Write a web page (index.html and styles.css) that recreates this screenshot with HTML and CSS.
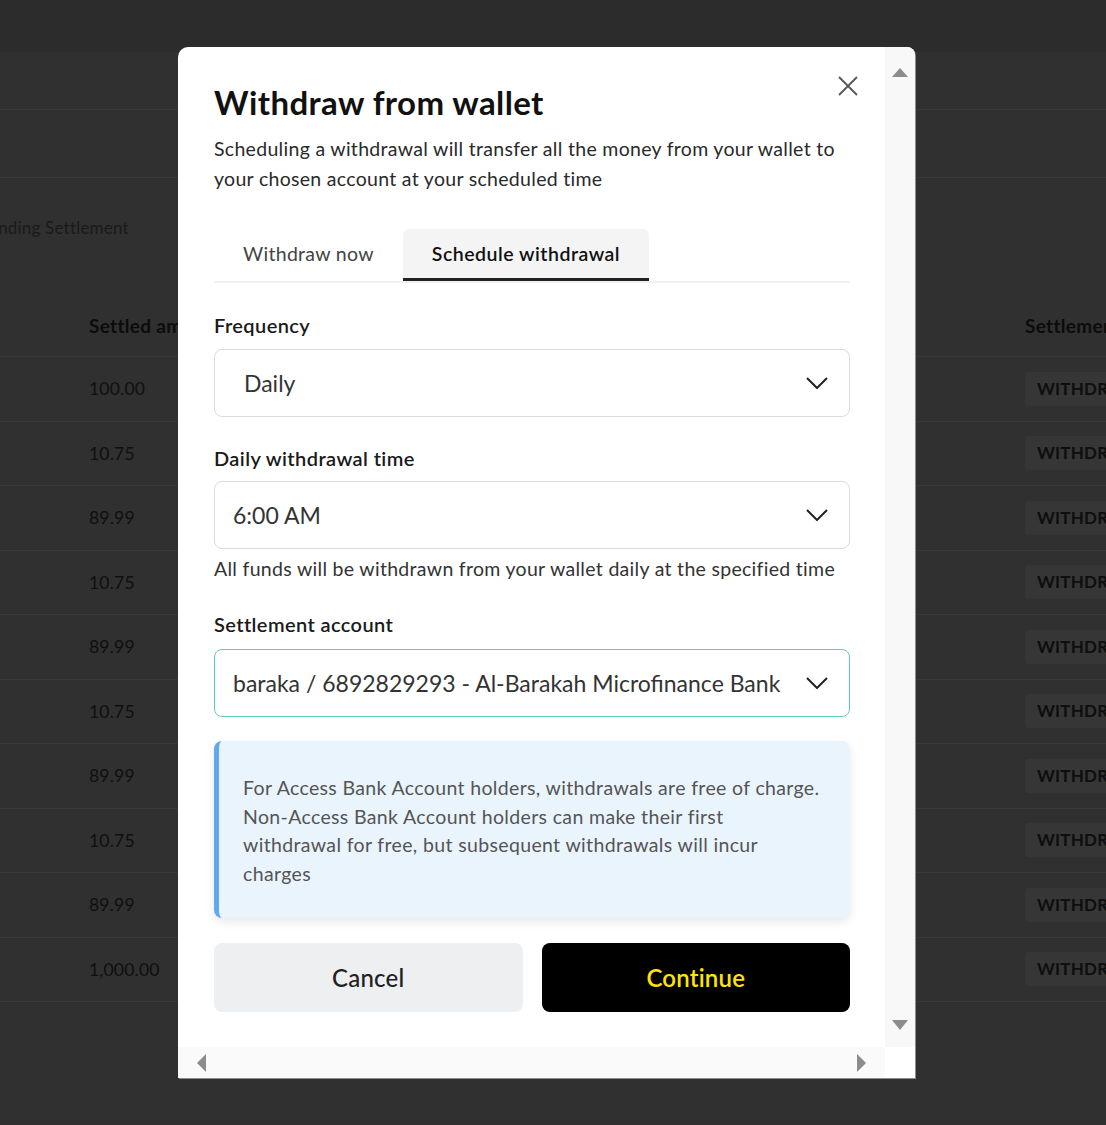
FILE: index.html
```html
<!DOCTYPE html>
<html lang="en">
<head>
<meta charset="utf-8">
<title>Withdraw from wallet</title>
<link rel="stylesheet" href="styles.css">
</head>
<body>
<div class="page">
  <div class="bg-top"></div>
  <div class="bg-band"></div>
  <div class="bg-band bg-band-tall"></div>
  <div class="bg-tabs"><span class="bg-tab">Pending Settlement</span></div>
  <div class="bg-table">
    <div class="bg-row bg-head"><span class="bg-amount">Settled amount</span><span class="bg-status">Settlement status</span></div>
    <div class="bg-row"><span class="bg-amount">100.00</span><span class="bg-status"><span class="badge">WITHDRAWAL</span></span></div>
    <div class="bg-row"><span class="bg-amount">10.75</span><span class="bg-status"><span class="badge">WITHDRAWAL</span></span></div>
    <div class="bg-row"><span class="bg-amount">89.99</span><span class="bg-status"><span class="badge">WITHDRAWAL</span></span></div>
    <div class="bg-row"><span class="bg-amount">10.75</span><span class="bg-status"><span class="badge">WITHDRAWAL</span></span></div>
    <div class="bg-row"><span class="bg-amount">89.99</span><span class="bg-status"><span class="badge">WITHDRAWAL</span></span></div>
    <div class="bg-row"><span class="bg-amount">10.75</span><span class="bg-status"><span class="badge">WITHDRAWAL</span></span></div>
    <div class="bg-row"><span class="bg-amount">89.99</span><span class="bg-status"><span class="badge">WITHDRAWAL</span></span></div>
    <div class="bg-row"><span class="bg-amount">10.75</span><span class="bg-status"><span class="badge">WITHDRAWAL</span></span></div>
    <div class="bg-row"><span class="bg-amount">89.99</span><span class="bg-status"><span class="badge">WITHDRAWAL</span></span></div>
    <div class="bg-row"><span class="bg-amount">1,000.00</span><span class="bg-status"><span class="badge">WITHDRAWAL</span></span></div>
  </div>
</div>

<div class="modal">
  <div class="modal-body">
    <div class="modal-head">
      <h1 class="title">Withdraw from wallet</h1>
      <button class="close" aria-label="Close">
        <svg width="20" height="20" viewBox="0 0 20 20"><path d="M1 1 L19 19 M19 1 L1 19" stroke="#555" stroke-width="1.8" fill="none"/></svg>
      </button>
    </div>
    <p class="sub">Scheduling a withdrawal will transfer all the money from your wallet to<br>your chosen account at your scheduled time</p>

    <div class="tabs">
      <div class="tab">Withdraw now</div>
      <div class="tab tab-active">Schedule withdrawal</div>
    </div>

    <div class="label label-first">Frequency</div>
    <div class="select select-wide">
      <span>Daily</span>
      <svg class="chev" width="22" height="12" viewBox="0 0 22 12"><polyline points="1,1 11,11 21,1" fill="none" stroke="#222" stroke-width="2"/></svg>
    </div>

    <div class="label">Daily withdrawal time</div>
    <div class="select">
      <span>6:00 AM</span>
      <svg class="chev" width="22" height="12" viewBox="0 0 22 12"><polyline points="1,1 11,11 21,1" fill="none" stroke="#222" stroke-width="2"/></svg>
    </div>
    <div class="help">All funds will be withdrawn from your wallet daily at the specified time</div>

    <div class="label label-third">Settlement account</div>
    <div class="select select-focus">
      <span>baraka / 6892829293 - Al-Barakah Microfinance Bank</span>
      <svg class="chev" width="22" height="12" viewBox="0 0 22 12"><polyline points="1,1 11,11 21,1" fill="none" stroke="#222" stroke-width="2"/></svg>
    </div>

    <div class="info">For Access Bank Account holders, withdrawals are free of charge.<br>Non-Access Bank Account holders can make their first<br>withdrawal for free, but subsequent withdrawals will incur<br>charges</div>

    <div class="actions">
      <button class="btn btn-cancel">Cancel</button>
      <button class="btn btn-continue">Continue</button>
    </div>
  </div>
  <div class="vscroll"><span class="arrow-up"></span><span class="arrow-down"></span></div>
  <div class="hscroll"><span class="arrow-left"></span><span class="arrow-right"></span></div>
  <div class="corner"></div>
</div>
</body>
</html>
```

FILE: styles.css
```css
* { box-sizing: border-box; margin: 0; padding: 0; }

body {
  width: 1106px;
  height: 1125px;
  overflow: hidden;
  position: relative;
  background: #303030;
  font-family: "Lato", "Noto Sans", sans-serif;
  color: #111;
}

/* ---------- dimmed background page ---------- */
.page { display: flex; flex-direction: column; }
.bg-top { height: 52px; background: #2c2c2c; }
.bg-band { height: 58px; border-bottom: 1px solid #383838; }
.bg-band-tall { height: 68px; }
.bg-tabs { height: 117px; padding-top: 38px; }
.bg-tab { display: inline-block; margin-left: -21px; font-size: 17px; line-height: 24px; letter-spacing: 0.2px; color: #1a1a1a; }

.bg-table { display: flex; flex-direction: column; }
.bg-row {
  height: 64.5px;
  display: flex;
  align-items: center;
  border-bottom: 1px solid #383838;
  font-size: 17.5px;
  letter-spacing: 0.2px;
  color: #0f0f0f;
  white-space: nowrap;
}
.bg-head { height: 62px; font-weight: 700; font-size: 19px; letter-spacing: 0.3px; color: #0c0c0c; }
.bg-amount { padding-left: 89px; }
.bg-status { margin-left: auto; width: 82px; overflow: hidden; padding-left: 1px; }
.badge {
  display: inline-block;
  height: 34px;
  line-height: 34px;
  padding: 0 12px;
  background: #363636;
  border-radius: 4px;
  font-weight: 700;
  font-size: 17px;
  color: #0e0e0e;
}

/* ---------- modal ---------- */
.modal {
  position: absolute;
  left: 178px;
  top: 47px;
  width: 737px;
  height: 1031px;
  display: grid;
  grid-template-columns: 707px 30px;
  grid-template-rows: 1000px 31px;
  background: #fff;
  border-radius: 10px 8px 0 0;
  box-shadow: 1px 1px 0 #8c8c8c;
  overflow: hidden;
}

.modal-body {
  padding: 37px 35px 0 36px;
  overflow: hidden;
}

.modal-head { display: flex; justify-content: space-between; align-items: flex-start; }
.title { font-size: 33px; line-height: 36px; font-weight: 700; color: #111; letter-spacing: 0.4px; }
.close {
  margin-top: -8px;
  margin-right: -8px;
  width: 20px;
  height: 20px;
  border: none;
  background: none;
  display: flex;
}

.sub { margin-top: 14px; font-size: 19.5px; line-height: 30px; letter-spacing: 0.3px; color: #2a2a2a; }

.tabs { margin-top: 35px; display: flex; border-bottom: 2px solid #f0f0f0; }
.tab {
  height: 52px;
  line-height: 49px;
  padding: 0 29px;
  font-size: 19.5px;
  letter-spacing: 0.3px;
  color: #444;
  border-bottom: 3px solid transparent;
}
.tab-active {
  background: #f4f4f4;
  border-radius: 6px 6px 0 0;
  border-bottom-color: #222;
  color: #111;
  font-weight: 600;
  letter-spacing: 0.5px;
}

.label { margin-top: 29px; font-size: 20px; line-height: 24px; letter-spacing: 0.4px; font-weight: 600; color: #1a1a1a; }
.label-first { margin-top: 30px; }
.label-third { margin-top: 31px; }

.select {
  margin-top: 11px;
  height: 68px;
  border: 1.5px solid #dcdcdc;
  border-radius: 8px;
  display: flex;
  align-items: center;
  justify-content: space-between;
  padding: 0 21px 0 18px;
  font-size: 23px;
  color: #333;
}
.select-wide { margin-top: 12px; padding-left: 29px; }
.select-focus { margin-top: 13px; border-color: #5ccac1; }
.chev { flex: none; }

.help { margin-top: 8px; font-size: 19.5px; line-height: 24px; letter-spacing: 0.3px; color: #333; }

.info {
  margin-top: 24px;
  background: #eaf4fd;
  border-left: 5px solid #61a9ee;
  border-radius: 8px;
  padding: 33px 20px 29px 24px;
  box-shadow: 0 4px 10px rgba(0, 0, 0, 0.09);
  font-size: 19.5px;
  line-height: 28.7px;
  letter-spacing: 0.35px;
  color: #555;
  white-space: nowrap;
}

.actions { margin-top: 25px; display: grid; grid-template-columns: 1fr 1fr; gap: 19px; }
.btn {
  height: 69px;
  border: none;
  border-radius: 8px;
  font-family: inherit;
  font-size: 24px;
  letter-spacing: 0.2px;
  font-weight: 600;
}
.btn-cancel { background: #eeeff1; color: #222; font-weight: 500; }
.btn-continue { background: #000; color: #ffe500; }

/* ---------- scrollbars ---------- */
.vscroll {
  background: #f8f8f8;
  display: flex;
  flex-direction: column;
  justify-content: space-between;
  align-items: center;
  padding: 21px 0 17px;
}
.arrow-up { width: 0; height: 0; border-left: 8.5px solid transparent; border-right: 8.5px solid transparent; border-bottom: 9px solid #8c8c8c; }
.arrow-down { width: 0; height: 0; border-left: 8.5px solid transparent; border-right: 8.5px solid transparent; border-top: 10px solid #8c8c8c; }

.hscroll {
  background: #fafafa;
  display: flex;
  justify-content: space-between;
  align-items: center;
  padding: 0 19px 0 19px;
}
.arrow-left { width: 0; height: 0; border-top: 9px solid transparent; border-bottom: 9px solid transparent; border-right: 9px solid #8c8c8c; }
.arrow-right { width: 0; height: 0; border-top: 9px solid transparent; border-bottom: 9px solid transparent; border-left: 9px solid #8c8c8c; }
.corner { background: #fff; }
```
